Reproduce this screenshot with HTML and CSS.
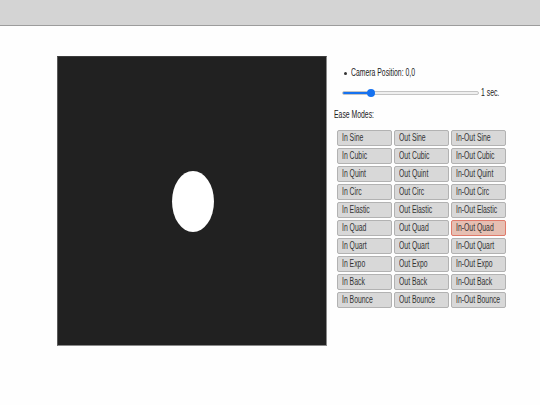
FILE: index.html
```html
<!DOCTYPE html>
<html>
<head>
<meta charset="utf-8">
<link rel="stylesheet" href="styles.css">
</head>
<body>
<div class="topbar"></div>
<div class="main">
  <div class="stage">
    <div class="ball"></div>
  </div>
  <div class="panel">
    <ul class="info">
      <li><span class="t">Camera Position: 0,0</span></li>
    </ul>
    <div class="duration">
      <input class="range" type="range" min="0" max="100" value="19">
      <span class="unit"><span class="t">1 sec.</span></span>
    </div>
    <div class="label"><span class="t">Ease Modes:</span></div>
    <div class="modes">
      <button class="mode"><span class="t">In Sine</span></button>
      <button class="mode"><span class="t">Out Sine</span></button>
      <button class="mode"><span class="t">In-Out Sine</span></button>
      <button class="mode"><span class="t">In Cubic</span></button>
      <button class="mode"><span class="t">Out Cubic</span></button>
      <button class="mode"><span class="t">In-Out Cubic</span></button>
      <button class="mode"><span class="t">In Quint</span></button>
      <button class="mode"><span class="t">Out Quint</span></button>
      <button class="mode"><span class="t">In-Out Quint</span></button>
      <button class="mode"><span class="t">In Circ</span></button>
      <button class="mode"><span class="t">Out Circ</span></button>
      <button class="mode"><span class="t">In-Out Circ</span></button>
      <button class="mode"><span class="t">In Elastic</span></button>
      <button class="mode"><span class="t">Out Elastic</span></button>
      <button class="mode"><span class="t">In-Out Elastic</span></button>
      <button class="mode"><span class="t">In Quad</span></button>
      <button class="mode"><span class="t">Out Quad</span></button>
      <button class="mode active"><span class="t">In-Out Quad</span></button>
      <button class="mode"><span class="t">In Quart</span></button>
      <button class="mode"><span class="t">Out Quart</span></button>
      <button class="mode"><span class="t">In-Out Quart</span></button>
      <button class="mode"><span class="t">In Expo</span></button>
      <button class="mode"><span class="t">Out Expo</span></button>
      <button class="mode"><span class="t">In-Out Expo</span></button>
      <button class="mode"><span class="t">In Back</span></button>
      <button class="mode"><span class="t">Out Back</span></button>
      <button class="mode"><span class="t">In-Out Back</span></button>
      <button class="mode"><span class="t">In Bounce</span></button>
      <button class="mode"><span class="t">Out Bounce</span></button>
      <button class="mode"><span class="t">In-Out Bounce</span></button>
    </div>
  </div>
</div>
</body>
</html>
```
FILE: styles.css
```css
html, body {
  margin: 0;
  padding: 0;
  background: #fefefe;
  font-family: "Liberation Sans", Arial, sans-serif;
  font-size: 10px;
  color: #222;
}

/* the reference renders its text horizontally condensed */
.t {
  display: inline-block;
  white-space: nowrap;
  transform: scaleX(0.685);
  transform-origin: left center;
}

.topbar {
  height: 25px;
  background: #d4d4d4;
  border-bottom: 1px solid #9c9c9c;
}

.main {
  display: flex;
  align-items: flex-start;
  padding: 30px 0 0 57px;
}

.stage {
  box-sizing: border-box;
  width: 270px;
  height: 290px;
  background: #212121;
  border: 1px solid #8a8a8a;
  border-top-color: #3c3c3c;
  border-left-color: #5a5a5a;
  position: relative;
}

.ball {
  position: absolute;
  left: 114px;
  top: 114px;
  width: 42px;
  height: 61px;
  border-radius: 50%;
  background: #ffffff;
}

.panel {
  margin-left: 7px;
  display: flex;
  flex-direction: column;
}

.info {
  list-style: none;
  margin: 11px 0 0 0;
  padding: 0;
}

.info li {
  display: flex;
  align-items: center;
  gap: 4px;
  padding-left: 10px;
  height: 12px;
  line-height: 12px;
}

.info li::before {
  content: "";
  width: 3px;
  height: 3px;
  border-radius: 50%;
  background: #333;
}

.duration {
  display: flex;
  align-items: center;
  margin: 9px 0 0 8px;
  height: 10px;
}

.range {
  -webkit-appearance: none;
  appearance: none;
  margin: 0;
  width: 137px;
  height: 4px;
  border-radius: 2px;
  border: 1px solid #c4c4c4;
  box-sizing: border-box;
  background: linear-gradient(to right, #1672f0 0 21%, #efefef 21% 100%);
}

.range::-webkit-slider-thumb {
  -webkit-appearance: none;
  appearance: none;
  width: 8px;
  height: 8px;
  border-radius: 50%;
  background: #1672f0;
  border: none;
}

.unit {
  margin-left: 2px;
  line-height: 10px;
}

.label {
  margin: 11px 0 0 0;
  line-height: 12px;
}

.modes {
  margin: 9px 0 0 3px;
  display: grid;
  grid-template-columns: repeat(3, 55px);
  grid-auto-rows: 16px;
  gap: 2px;
}

.mode {
  box-sizing: border-box;
  margin: 0;
  padding: 0 0 0 4px;
  text-align: left;
  font: inherit;
  color: #333;
  background: #d8d8d8;
  border: 1px solid #b2b2b2;
  border-radius: 2px;
  line-height: 14px;
  white-space: nowrap;
}

.mode.active {
  background: #e6bfb2;
  border-color: #e07a6a;
}
```
